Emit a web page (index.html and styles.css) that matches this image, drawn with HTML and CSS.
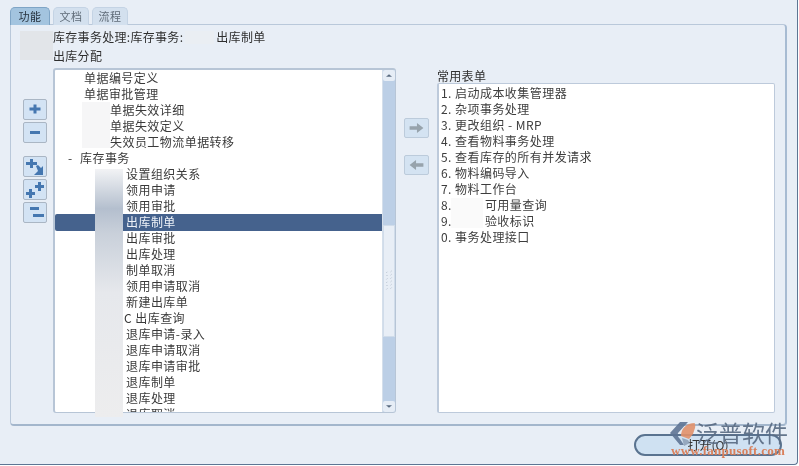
FILE: index.html
```html
<!DOCTYPE html>
<html lang="zh">
<head>
<meta charset="utf-8">
<title>库存事务</title>
<link rel="stylesheet" href="styles.css">
</head>
<body>
<div class="app">
  <div class="tabs">
    <div class="tab active">功能</div>
    <div class="tab">文档</div>
    <div class="tab">流程</div>
  </div>
  <div class="panel">
    <div class="crumb">库存事务处理:库存事务:<span class="gap"></span>出库制单</div>
    <div class="crumb sub">出库分配</div>
    <div class="columns">
      <div class="tools">
        <div class="btn"><svg viewBox="0 0 22 19"><path class="ic" d="M9.500 4.500h3v3h4v3h-4v3h-3v-3h-4v-3h4z"/></svg></div>
        <div class="btn"><svg viewBox="0 0 22 19"><path class="ic" d="M6 8h10v3H6z"/></svg></div>
        <div class="btn sep"><svg viewBox="0 0 22 19"><path class="ic" d="M6 2h3v3h4v3H9v3H6V8H2V5h4z"/><path class="ic" d="M12 9l2-1 3 3 2-2v9h-9l2-2 1-1 1-1z"/></svg></div>
        <div class="btn"><svg viewBox="0 0 22 19"><path class="ic" d="M5 9h3v3h3v3H8v3H5v-3H2v-3h3z"/><path class="ic" d="M14 2h3v3h3v3h-3v3h-3V8h-3V5h3z"/></svg></div>
        <div class="btn"><svg viewBox="0 0 22 19"><path class="ic" d="M6 4h9v3H6zM9 11h11v3H9z"/></svg></div>
      </div>
      <div class="tree-box">
        <div class="tree">
          <div class="row l1">单据编号定义</div>
          <div class="row l1">单据审批管理</div>
          <div class="row l2">单据失效详细</div>
          <div class="row l2">单据失效定义</div>
          <div class="row l2">失效员工物流单据转移</div>
          <div class="row l0"><span class="dash">-</span>库存事务</div>
          <div class="row l3">设置组织关系</div>
          <div class="row l3">领用申请</div>
          <div class="row l3">领用审批</div>
          <div class="row l3 selected">出库制单</div>
          <div class="row l3">出库审批</div>
          <div class="row l3">出库处理</div>
          <div class="row l3">制单取消</div>
          <div class="row l3">领用申请取消</div>
          <div class="row l3">新建出库单</div>
          <div class="row l3 query">C 出库查询</div>
          <div class="row l3">退库申请-录入</div>
          <div class="row l3">退库申请取消</div>
          <div class="row l3">退库申请审批</div>
          <div class="row l3">退库制单</div>
          <div class="row l3">退库处理</div>
          <div class="row l3">退库取消</div>
        </div>
        <div class="scrollbar">
          <div class="sb-btn"><svg viewBox="0 0 14 12"><path class="sb-ar" d="M3.500 7.500L7 4.500l3.500 3z"/></svg></div>
          <div class="track upper"></div>
          <div class="thumb"><svg viewBox="0 0 12 24" class="grip"><path class="dots" d="M3 2l1-1M8 1l1-1M3 6l1-1M8 5l1-1M3 10l1-1M8 9l1-1M3 14l1-1M8 13l1-1M3 18l1-1M8 17l1-1M3 22l1-1M8 21l1-1"/></svg></div>
          <div class="track lower"></div>
          <div class="sb-btn"><svg viewBox="0 0 14 12"><path class="sb-ar" d="M3.500 4.500L7 7.500l3.500-3z"/></svg></div>
        </div>
      </div>
      <div class="moves">
        <div class="mv"><svg viewBox="0 0 25 19"><path class="mv-ic" d="M5 7.500h8V4l7 5.500-7 5.500v-3.500H5z"/></svg></div>
        <div class="mv"><svg viewBox="0 0 25 19"><path class="mv-ic" d="M20 7.500h-8V4L5 9.500l7 5.500v-3.500h8z"/></svg></div>
      </div>
      <div class="fav">
        <div class="fav-title">常用表单</div>
        <div class="fav-list">
          <div class="frow">1. 启动成本收集管理器</div>
          <div class="frow">2. 杂项事务处理</div>
          <div class="frow">3. 更改组织 - MRP</div>
          <div class="frow">4. 查看物料事务处理</div>
          <div class="frow">5. 查看库存的所有并发请求</div>
          <div class="frow">6. 物料编码导入</div>
          <div class="frow">7. 物料工作台</div>
          <div class="frow">8.<span class="hole"></span>可用量查询</div>
          <div class="frow">9.<span class="hole"></span>验收标识</div>
          <div class="frow">0. 事务处理接口</div>
        </div>
      </div>
    </div>
  </div>
  <div class="footer"><div class="open">打开(O)</div></div>

  <div class="patch p-a"></div>
  <div class="patch p-b"></div>
  <div class="patch p-c"></div>
  <div class="patch p-d"></div>
  <div class="patch p-e"></div>

  <div class="mark">
    <svg class="mark-logo" viewBox="0 0 26 26">
      <path fill="#5f7595" d="M10 0h8L8 11c-1 2 0 4 2 6l4 6-4 0L0 11z"/>
      <path fill="#e2926c" d="M11 14C11 7 16 1 25 1c-1 1 1 2 0 5l-2 6-4 5z"/>
      <path fill="#8fa2ba" d="M12 16l6 2 2 3-6 3z"/>
    </svg>
    <div class="mark-name">泛普软件</div>
    <div class="mark-url">www.fanpusoft.com</div>
  </div>
</div>
</body>
</html>
```
FILE: styles.css
```css
* { box-sizing: border-box; }
html, body { margin: 0; padding: 0; }
body {
  width: 799px;
  height: 466px;
  overflow: hidden;
  background: #fff;
  font-family: "Noto Sans CJK SC", "Liberation Sans", sans-serif;
  font-size: 12px;
  color: #2e2e2e;
}
.app {
  position: relative;
  width: 798px;
  height: 465px;
  padding: 7px 0 0 10px;
  background: #e8eef6;
  border-right: 1px solid #5d7694;
  border-bottom: 1px solid #5d7694;
  border-bottom-right-radius: 4px;
  filter: blur(.4px);
}
.tabs { display: flex; height: 17px; gap: 3px; }
.tab {
  width: 36px;
  height: 18px;
  background: #d3e0ee;
  border: 1px solid #c4d3e4;
  border-bottom: 0;
  border-radius: 5px 5px 0 0;
  text-align: center;
  line-height: 17px;
  font-size: 11px;
  color: #5f6b78;
  letter-spacing: .5px;
}
.tab.active {
  width: 40px;
  background: #a3c4df;
  border-color: #7fa5c6;
  color: #26323e;
}
.panel {
  width: 777px;
  height: 402px;
  padding: 3px 0 0 42px;
  border: 1px solid #b9c8da;
  border-right: 2px solid #a7bbd2;
  border-bottom: 2px solid #a3b6cc;
  border-radius: 0 4px 4px 4px;
}
.crumb { height: 18px; line-height: 18px; letter-spacing: .3px; color: #2f2f2f; white-space: nowrap; }
.crumb.sub { height: 19px; margin-top: 1px; }
.gap { display: inline-block; width: 33px; }
.columns { display: flex; margin-left: -30px; margin-top: 2px; }
.tools { width: 30px; padding: 31px 0 0 0; display: flex; flex-direction: column; gap: 2px; }
.btn {
  width: 24px;
  height: 21px;
  background: #d3e3f4;
  border: 1px solid #aab6c4;
  border-radius: 2px;
}
.btn svg { display: block; width: 22px; height: 19px; }
.btn.sep { margin-top: 11px; }
.ic { fill: #4577b0; }
.tree-box {
  display: flex;
  width: 343px;
  height: 345px;
  background: #fff;
  border: 1px solid #b7c5d6;
  border-top-width: 2px;
  border-left-width: 2px;
  border-radius: 3px;
  overflow: hidden;
}
.tree { width: 328px; height: 342px; overflow: hidden; }
.row { height: 16px; line-height: 16px; letter-spacing: .45px; color: #3a3a3a; white-space: nowrap; }
.l0 { padding-left: 13px; }
.dash { display: inline-block; width: 12px; }
.l1 { padding-left: 29px; }
.l2 { padding-left: 55px; }
.l3 { padding-left: 71px; }
.selected { background: #45628d; color: #eef2f8; border-radius: 2px 0 0 2px; height: 17px; margin-bottom: -1px; }
.query { padding-left: 69px; }
.scrollbar { width: 13px; display: flex; flex-direction: column; background: #bccfe6; border-left: 1px solid #d5dfeb; }
.sb-btn { height: 11px; background: #e6edf6; border-radius: 2px; flex: none; }
.sb-btn svg { display: block; width: 12px; height: 11px; }
.sb-ar { fill: #5a6b80; }
.track.upper { height: 144px; flex: none; }
.thumb {
  height: 112px;
  flex: none;
  background: #e8eef6;
  border: 1px solid #d0dcea;
  display: flex;
  align-items: center;
  justify-content: center;
}
.grip { width: 10px; height: 24px; }
.dots { stroke: #8c9bad; stroke-width: .8; fill: none; }
.track.lower { flex: 1; }
.moves { width: 41px; padding: 50px 0 0 8px; display: flex; flex-direction: column; gap: 17px; }
.mv {
  width: 25px;
  height: 20px;
  background: #d4e3f2;
  border: 1px solid #bccbdb;
  border-radius: 2px;
}
.mv svg { display: block; width: 23px; height: 18px; }
.mv-ic { fill: #97a3ac; }
.fav { width: 338px; }
.fav-title { height: 15px; line-height: 15px; letter-spacing: .3px; color: #2f2f2f; }
.fav-list {
  height: 330px;
  background: #fff;
  border: 1px solid #bdcadb;
  border-left-width: 2px;
  border-radius: 2px;
  padding-left: 2px;
}
.frow { height: 16px; line-height: 17px; letter-spacing: .45px; color: #3d3d3d; white-space: nowrap; }
.hole { display: inline-block; width: 33px; }
.footer { display: flex; justify-content: flex-end; padding: 8px 15px 0 0; }
.open {
  width: 148px;
  height: 22px;
  background: #cfe1f2;
  border: 2px solid #5a7390;
  border-radius: 11px;
  text-align: center;
  line-height: 18px;
  color: #333;
}
.patch { position: absolute; }
.p-a { left: 20px; top: 31px; width: 33px; height: 29px; background: #e2e5e9; }
.p-b { left: 185px; top: 31px; width: 29px; height: 13px; background: #eaeef3; }
.p-c { left: 82px; top: 102px; width: 28px; height: 46px; background: #f6f6f7; }
.p-d {
  left: 95px;
  top: 169px;
  width: 28px;
  height: 248px;
  background: linear-gradient(180deg, #f2f3f5 0%, #b4bfce 16%, #c9d0da 26%, #e6e8ec 50%, #ededee 100%);
}
.p-e { left: 451px; top: 198px; width: 32px; height: 30px; background: #fafafa; }
.mark { position: absolute; left: 670px; top: 421px; width: 120px; height: 38px; }
.mark-logo { position: absolute; left: 0; top: 1px; width: 26px; height: 26px; opacity: .9; }
.mark-name {
  position: absolute;
  left: 26px;
  top: -2px;
  font-size: 23px;
  line-height: 26px;
  color: #5a6c84;
  opacity: .92;
  white-space: nowrap;
}
.mark-url {
  position: absolute;
  left: 1px;
  top: 23px;
  font-family: "Liberation Serif", serif;
  font-weight: bold;
  font-size: 13px;
  line-height: 14px;
  letter-spacing: .25px;
  color: #d9805c;
  white-space: nowrap;
}
```
